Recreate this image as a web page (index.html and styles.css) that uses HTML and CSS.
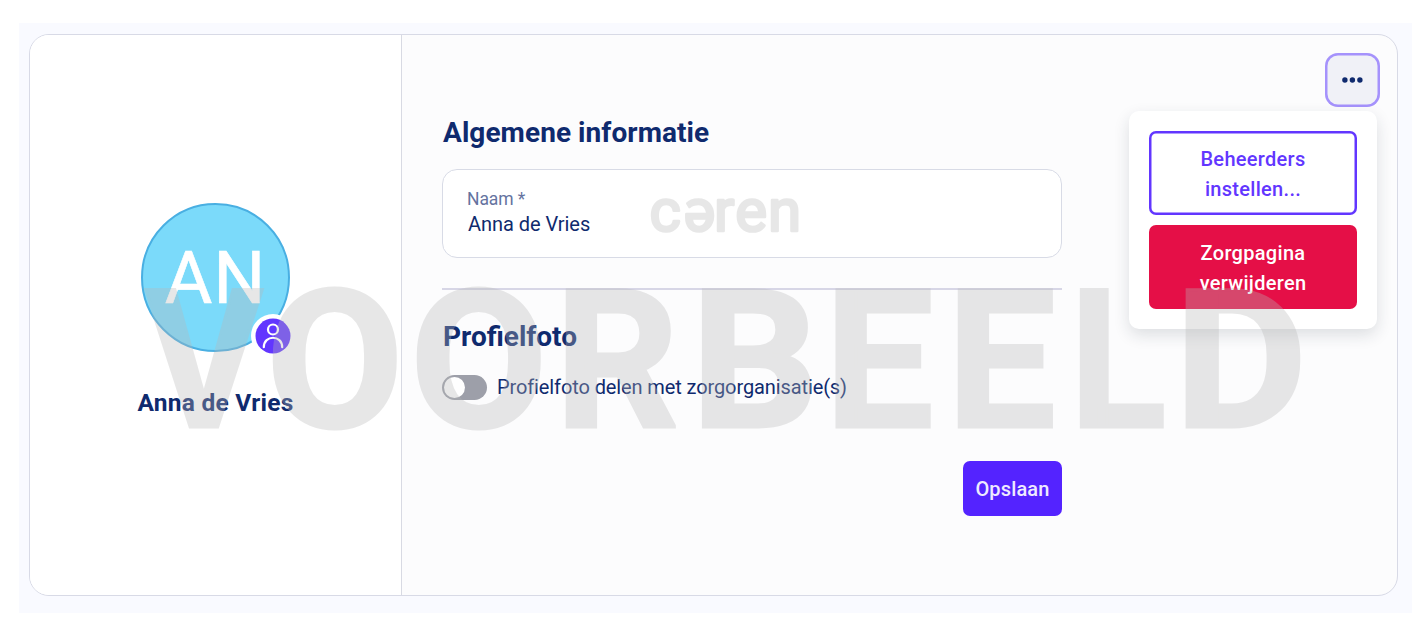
FILE: index.html
```html
<!DOCTYPE html>
<html lang="nl">
<head>
<meta charset="utf-8">
<title>Zorgpagina</title>
<link rel="stylesheet" href="styles.css">
</head>
<body>
<div class="page">
  <div class="card">
    <aside class="profile">
      <div class="avatar"><span class="initials">AN</span>
        <svg class="badge" viewBox="0 0 44 44">
          <circle cx="22" cy="22" r="22" fill="#fff"/>
          <circle cx="22" cy="22" r="17.5" fill="#6236ff"/>
          <g fill="none" stroke="#fff" stroke-width="2.2" stroke-linecap="round">
            <circle cx="22" cy="15.5" r="5"/>
            <path d="M12.8 33.2c0-12.6 18.4-12.6 18.4 0"/>
          </g>
        </svg>
      </div>
      <div class="name">Anna de Vries</div>
    </aside>
    <main class="content">
      <form class="form">
        <h2 class="heading">Algemene informatie</h2>
        <div class="field">
          <div class="label">Naam *</div>
          <div class="value">Anna de Vries</div>
        </div>
        <div class="rule"></div>
        <h2 class="heading short">Profielfoto</h2>
        <div class="switch-row">
          <span class="switch"><span class="knob"></span></span>
          <span class="switch-label">Profielfoto delen met zorgorganisatie(s)</span>
        </div>
        <div class="actions"><div class="save">Opslaan</div></div>
      </form>
      <div class="menu">
        <div class="more">
          <svg width="23" height="6" viewBox="0 0 23 6" fill="#0f2a6e"><circle cx="3.9" cy="3" r="2.7"/><circle cx="11.4" cy="3" r="2.7"/><circle cx="18.9" cy="3" r="2.7"/></svg>
        </div>
        <div class="dropdown">
          <div class="item outline"><span>Beheerders</span><span>instellen...</span></div>
          <div class="item danger"><span>Zorgpagina</span><span>verwijderen</span></div>
        </div>
      </div>
    </main>
  </div>
</div>
<svg class="watermark" viewBox="0 0 1426 630">
  <text class="wordmark" x="649.5 683.5 714 735.2 768" y="231.3">cəren</text>
  <text class="voorbeeld" y="426.5"><tspan x="145" textLength="118" lengthAdjust="spacingAndGlyphs">V</tspan><tspan x="266" textLength="137.5" lengthAdjust="spacingAndGlyphs">O</tspan><tspan x="410" textLength="137.5" lengthAdjust="spacingAndGlyphs">O</tspan><tspan x="554.9">R</tspan><tspan x="690.7" textLength="128" lengthAdjust="spacingAndGlyphs">B</tspan><tspan x="824.7">E</tspan><tspan x="946.9">E</tspan><tspan x="1069.9" textLength="96" lengthAdjust="spacingAndGlyphs">L</tspan><tspan x="1174.3" textLength="133" lengthAdjust="spacingAndGlyphs">D</tspan></text>
</svg>
</body>
</html>
```
FILE: styles.css
```css
* { box-sizing: border-box; }
body { margin: 0; width: 1426px; height: 630px; overflow: hidden; background: #fff; font-family: Roboto, sans-serif; color: #0f2a6e; }
.page { margin: 23px 14px 0 19px; height: 590px; padding: 11px 14px 16px 10px; background: #f9faff; }
.card { display: flex; height: 562px; border: 1.5px solid #d8dae6; border-radius: 20px; background: #fcfcfd; overflow: hidden; }
.profile { width: 372px; border-right: 1px solid #d8dae3; background: #fff; display: flex; flex-direction: column; align-items: center; padding-top: 168px; }
.avatar { position: relative; width: 149px; height: 149px; border: 2px solid #49afe2; border-radius: 50%; background: #7bdafa; display: flex; align-items: center; justify-content: center; }
.initials { font-size: 73px; line-height: 80px; color: #fff; letter-spacing: 1px; -webkit-text-stroke: .6px #fff; }
.badge { position: absolute; left: 107.5px; top: 108.5px; width: 44px; height: 44px; }
.name { margin-top: 34px; font-size: 24.5px; line-height: 34px; font-weight: 700; letter-spacing: .25px; white-space: nowrap; }
.content { flex: 1; display: flex; justify-content: space-between; padding: 18px 17px 0 40px; }
.form { width: 620px; padding-top: 61px; }
.heading { margin: 0; padding-left: 1px; font-size: 28px; line-height: 38px; font-weight: 700; letter-spacing: .07px; white-space: nowrap; }
.field { margin-top: 17px; height: 89px; border: 1.5px solid #d8dbe6; border-radius: 15px; background: #fff; padding: 17px 24px; }
.label { font-size: 17.5px; line-height: 24px; color: #65739f; letter-spacing: -.1px; }
.value { font-size: 20px; line-height: 26px; padding-left: 1px; letter-spacing: -.05px; }
.rule { margin-top: 30px; height: 1.5px; background: #d7d6e6; }
.heading.short { margin-top: 28.5px; letter-spacing: 0; }
.switch-row { margin-top: 14px; height: 34px; display: flex; align-items: center; gap: 10px; }
.switch { width: 45px; height: 25px; border-radius: 13px; background: #9d9fa9; padding: 2px; }
.knob { display: block; width: 21px; height: 21px; border-radius: 50%; background: #fff; }
.switch-label { font-size: 20px; line-height: 30px; letter-spacing: -.11px; white-space: nowrap; }
.actions { margin-top: 57px; display: flex; justify-content: flex-end; }
.save { width: 99px; height: 55px; border-radius: 7px; background: #5423ff; color: #eeeaff; font-size: 20px; line-height: 56px; font-weight: 500; text-align: center; letter-spacing: .15px; }
.menu { width: 251px; display: flex; flex-direction: column; align-items: flex-end; }
.more { width: 55px; height: 54px; border-radius: 13px; background: #f0f1f7; box-shadow: inset 0 0 0 2.5px #a592fc; display: flex; align-items: center; justify-content: center; }
.dropdown { width: 248px; height: 218px; margin: 4px 3px 0 0; padding: 20px; border-radius: 10px; background: #fff; box-shadow: 0 6px 16px rgba(30, 40, 60, .14); display: grid; gap: 10px; grid-template-rows: 84px 84px; }
.item { display: flex; flex-direction: column; align-items: center; justify-content: center; border-radius: 7px; font-size: 20px; line-height: 30px; font-weight: 500; letter-spacing: .3px; padding-top: 2px; }
.outline { box-shadow: inset 0 0 0 2.5px #6236ff; color: #6236ff; }
.danger { background: #e50f47; color: #fff; }
.watermark { position: absolute; left: 0; top: 0; width: 1426px; height: 630px; opacity: .33; pointer-events: none; fill: #b8b8b8; stroke: #b8b8b8; }
.voorbeeld { font: 700 193.2px Roboto, sans-serif; stroke-width: 3px; }
.wordmark { font: 400 60px Roboto, sans-serif; stroke-width: 2.7px; stroke-linejoin: round; }
```
